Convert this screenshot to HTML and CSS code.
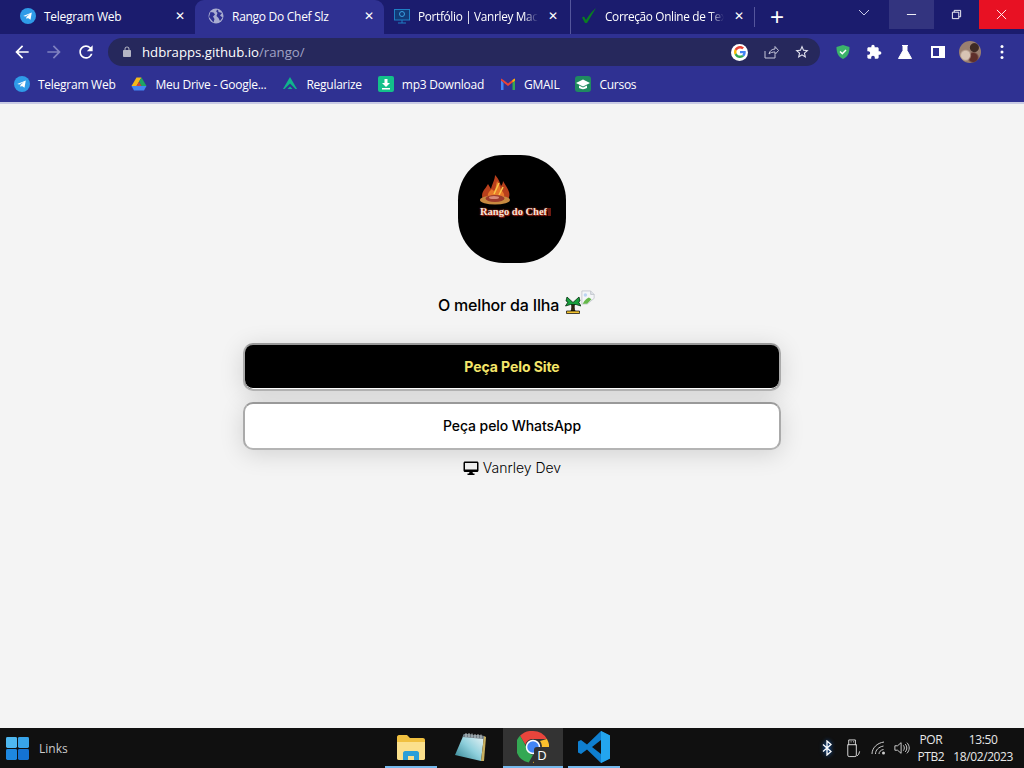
FILE: index.html
```html
<!DOCTYPE html>
<html lang="pt-BR">
<head>
    <meta charset="UTF-8">
    <meta name="viewport" content="width=device-width, initial-scale=1.0">
    <title>Rango Do Chef Slz</title>
    <link rel="stylesheet" href="styles.css">
</head>
<body>
    <svg class="defs" width="0" height="0">
        <symbol id="telegram" viewBox="0 0 16 16">
            <circle cx="8" cy="8" r="8" fill="#2f9be8"/>
            <path d="M3.2 8l8.6-3.5-1.3 7.2-2.6-1.8-1.3 1.2-.3-2.2 3.6-3-4.6 2.7z" fill="#fff"/>
        </symbol>
    </svg>

    <header class="chrome">
        <div class="tabstrip">
            <div class="tab">
                <svg class="favicon"><use href="#telegram"/></svg>
                <span class="tab-title">Telegram Web</span>
                <span class="tab-close">✕</span>
            </div>
            <div class="tab active">
                <svg class="favicon" viewBox="0 0 16 16">
                    <circle cx="8" cy="8" r="7.5" fill="#a9acd0"/>
                    <path d="M2.500 4l3 .5 1.500 2-2 2 1.500 2.500-1 3.500L1 9zM10 1.500l.5 2.500 3.500 1-2 2.500 2.500 2-2.500 3.500-1.500-3-2-2 1-3-1.500-2z" fill="#2f3192"/>
                </svg>
                <span class="tab-title">Rango Do Chef Slz</span>
                <span class="tab-close">✕</span>
            </div>
            <div class="tab third">
                <svg class="favicon" viewBox="0 0 16 16">
                    <rect x="0.500" y="1.500" width="15" height="10.500" fill="#123a78" stroke="#1f7fc4"/>
                    <circle cx="8" cy="6" r="2.500" fill="none" stroke="#3aa0e0"/>
                    <path d="M4 15h8M8 12v3" stroke="#1f7fc4"/>
                </svg>
                <span class="tab-title fade">Portfólio | Vanrley Mac</span>
                <span class="tab-close">✕</span>
            </div>
            <div class="tab sep">
                <svg class="favicon" viewBox="0 0 16 16">
                    <path d="M1 9.500l3 5.500h2L15 0C10 4 7.500 8 5 12L3 8.500z" fill="#0a7d22"/>
                </svg>
                <span class="tab-title fade">Correção Online de Tex</span>
                <span class="tab-close">✕</span>
            </div>
            <span class="new-tab">+</span>
            <svg class="tab-search" viewBox="0 0 12 8"><path d="M1 1l5 5 5-5" fill="none" stroke="#c8cae8"/></svg>
            <div class="win-controls">
                <div class="win-btn min"><svg viewBox="0 0 12 12"><path d="M1 6h10" stroke="#fff"/></svg></div>
                <div class="win-btn"><svg viewBox="0 0 12 12"><path d="M1.500 3.500h7v7h-7zM3.500 3.500v-2h7v7h-2" fill="none" stroke="#fff"/></svg></div>
                <div class="win-btn close"><svg viewBox="0 0 12 12"><path d="M1 1l10 10M11 1L1 11" stroke="#fff"/></svg></div>
            </div>
        </div>

        <div class="toolbar">
            <svg class="nav-icon" viewBox="0 0 24 24"><path d="M20 11H7.830l5.590-5.590L12 4l-8 8 8 8 1.410-1.410L7.830 13H20v-2z" fill="#fff"/></svg>
            <svg class="nav-icon" viewBox="0 0 24 24"><path d="M12 4l-1.410 1.410L16.170 11H4v2h12.170l-5.580 5.590L12 20l8-8z" fill="#7f81c0"/></svg>
            <svg class="nav-icon" viewBox="0 0 24 24"><path d="M17.650 6.350A7.958 7.958 0 0 0 12 4c-4.420 0-7.990 3.580-7.990 8s3.570 8 7.990 8c3.730 0 6.840-2.550 7.730-6h-2.080A5.990 5.990 0 0 1 12 18c-3.310 0-6-2.690-6-6s2.690-6 6-6c1.660 0 3.140.690 4.220 1.780L13 11h7V4l-2.350 2.350z" fill="#fff"/></svg>
            <div class="omnibox">
                <svg class="lock" viewBox="0 0 24 24"><path d="M18 8h-1V6c0-2.760-2.240-5-5-5S7 3.240 7 6v2H6c-1.100 0-2 .9-2 2v10c0 1.100.9 2 2 2h12c1.100 0 2-.9 2-2V10c0-1.100-.9-2-2-2zM9 6c0-1.660 1.340-3 3-3s3 1.340 3 3v2H9V6z" fill="#b4b5c4"/></svg>
                <span class="url">hdbrapps.github.io<span class="url-path">/rango/</span></span>
                <span class="google-badge">
                    <svg viewBox="0 0 48 48">
                        <path fill="#EA4335" d="M24 9.500c3.540 0 6.710 1.220 9.210 3.600l6.850-6.850C35.900 2.380 30.470 0 24 0 14.620 0 6.510 5.380 2.560 13.220l7.980 6.190C12.430 13.720 17.740 9.500 24 9.500z"/>
                        <path fill="#4285F4" d="M46.980 24.550c0-1.570-.15-3.090-.38-4.550H24v9.020h12.940c-.58 2.960-2.260 5.480-4.780 7.180l7.730 6c4.510-4.180 7.090-10.360 7.090-17.650z"/>
                        <path fill="#FBBC05" d="M10.530 28.590c-.48-1.450-.76-2.990-.76-4.590s.27-3.140.76-4.590l-7.980-6.190C.92 16.460 0 20.120 0 24c0 3.880.92 7.540 2.560 10.780l7.970-6.190z"/>
                        <path fill="#34A853" d="M24 48c6.480 0 11.930-2.130 15.890-5.810l-7.730-6c-2.150 1.450-4.920 2.300-8.160 2.300-6.260 0-11.570-4.220-13.470-9.910l-7.980 6.190C6.510 42.620 14.620 48 24 48z"/>
                    </svg>
                </span>
                <svg class="omni-icon" viewBox="0 0 16 16"><path d="M2 7v7h10v-3M6 10c.5-3 3-5 6-5V2.500L15.500 6.500 12 10.500V8c-2.500 0-4.500.500-6 2z" fill="none" stroke="#c4c5d8"/></svg>
                <svg class="omni-icon star" viewBox="0 0 24 24"><path d="M22 9.240l-7.190-.62L12 2 9.190 8.630 2 9.240l5.460 4.730L5.820 21 12 17.270 18.180 21l-1.630-7.030L22 9.240zM12 15.400l-3.760 2.270 1-4.280-3.320-2.880 4.380-.38L12 6.100l1.710 4.040 4.380.38-3.320 2.880 1 4.280L12 15.400z" fill="#e4e4f0"/></svg>
            </div>
            <div class="extensions">
                <svg class="ext" viewBox="0 0 16 16"><path d="M8 1l6.500 2c0 6-1.500 9.500-6.500 12C3 12.500 1.500 9 1.500 3z" fill="#3bb36a"/><path d="M5 7.500l2.300 2.300L11 6" fill="none" stroke="#fff" stroke-width="1.500"/></svg>
                <svg class="ext" viewBox="0 0 24 24"><path d="M20.500 11H19V7c0-1.100-.9-2-2-2h-4V3.500C13 2.120 11.880 1 10.500 1S8 2.120 8 3.500V5H4c-1.100 0-1.990.9-1.990 2v3.800H3.500c1.490 0 2.700 1.210 2.700 2.700s-1.210 2.700-2.700 2.700H2V20c0 1.100.9 2 2 2h3.800v-1.500c0-1.490 1.210-2.700 2.700-2.700 1.490 0 2.700 1.210 2.700 2.700V22H17c1.100 0 2-.9 2-2v-4h1.500c1.380 0 2.500-1.120 2.500-2.500S21.880 11 20.500 11z" fill="#fff"/></svg>
                <svg class="ext flask" viewBox="0 0 16 16"><path d="M5 1.500h6M6 2v4.500L1.500 14.500h13L10 6.500V2z" fill="#fff" stroke="#fff"/></svg>
                <svg class="ext panel" viewBox="0 0 16 16"><path d="M1 2h14v12H1zM3 4v8h6V4z" fill="#fff" fill-rule="evenodd"/></svg>
                <span class="avatar"></span>
                <svg class="ext menu" viewBox="0 0 4 16"><circle cx="2" cy="2.500" r="1.500" fill="#fff"/><circle cx="2" cy="8" r="1.500" fill="#fff"/><circle cx="2" cy="13.500" r="1.500" fill="#fff"/></svg>
            </div>
        </div>

        <nav class="bookmarks">
            <a class="bookmark"><svg class="favicon"><use href="#telegram"/></svg>Telegram Web</a>
            <a class="bookmark">
                <svg class="favicon" viewBox="0 0 16 16">
                    <path d="M5.500 1.500h5l-5 8.500H.5z" fill="#f5b91a"/>
                    <path d="M10.500 1.500l5 8.500h-5l-2.500-4.300z" fill="#1fa463"/>
                    <path d="M.5 10l2.500 4.500h10L15.500 10z" fill="#4285f4"/>
                    <path d="M5.500 10h5l-2.500-4.300z" fill="#d2463a"/>
                </svg>Meu Drive - Google...</a>
            <a class="bookmark">
                <svg class="favicon" viewBox="0 0 16 16">
                    <path d="M8 1l7 12H1z" fill="#10b48c"/>
                    <path d="M3 14l5-5 5 5" fill="none" stroke="#2f3192" stroke-width="2"/>
                </svg>Regularize</a>
            <a class="bookmark">
                <svg class="favicon" viewBox="0 0 16 16">
                    <rect width="16" height="16" rx="2" fill="#13c08a"/>
                    <path d="M6.500 3h3v4H12l-4 4-4-4h2.500zM4 12h8v1.500H4z" fill="#fff"/>
                </svg>mp3 Download</a>
            <a class="bookmark">
                <svg class="favicon" viewBox="0 0 16 16">
                    <path d="M1 4v10h2.500V7z" fill="#4285f4"/>
                    <path d="M12.500 7v7H15V4z" fill="#34a853"/>
                    <path d="M1 2.500v2L8 10l7-5.500v-2L12.500 4 8 7.500 3.500 4z" fill="#ea4335"/>
                    <path d="M12.500 4L15 2.500v2l-2.500 2z" fill="#fbbc05"/>
                </svg>GMAIL</a>
            <a class="bookmark">
                <svg class="favicon" viewBox="0 0 16 16">
                    <rect width="16" height="16" rx="3" fill="#1f8a60"/>
                    <path d="M8 3.500L15 7 8 10.500 1 7zM4 9.500v2.500c2.500 1.500 5.500 1.500 8 0V9.500L8 11.500z" fill="#fff"/>
                </svg>Cursos</a>
        </nav>
    </header>

    <main class="page">
        <div class="logo">
            <svg class="logo-flame" viewBox="0 0 32 30">
                <path d="M3 25C0 17 5 15 8 9c1 2 2 3 3 5 1-5 4-9 4-14 4 4 5 8 6 11 1-1 2-3 2-5 2 4 5 7 6 11 1 3 0 6-1 8z" fill="#b8401c"/>
                <path d="M8 22c-1-4 2-6 4-8 1 2 2 2 3 1 1-3 1-6 2-9 2 3 3 6 4 9 2 2 4 4 3 7z" fill="#e8782a"/>
                <path d="M19 8l-5 11M23 12l-4 8" stroke="#f8c848" stroke-width="1.500"/>
                <ellipse cx="15" cy="25" rx="15" ry="4.500" fill="#c88a40"/>
                <ellipse cx="15" cy="23.500" rx="9.500" ry="3.500" fill="#9c3a2c"/>
                <ellipse cx="14" cy="22.500" rx="5" ry="1.500" fill="#d88a78"/>
            </svg>
            <span class="logo-text">Rango do Chef</span>
        </div>

        <p class="tagline">O melhor da Ilha
            <svg class="palm" viewBox="0 0 16 18">
                <path d="M6.500 8c.5 3 .3 5-.5 7h4c-.8-2-1-4-.5-7z" fill="#3a2a10" stroke="#000" stroke-width=".7"/>
                <path d="M8 6.500L2 1 1 5l2 1-2.500 4 5-1.500L8 8.500l3 0 5 1.500-2.500-4L15 5l-1-4z" fill="#17a03c" stroke="#04300f" stroke-width=".8"/>
                <path d="M1.500 15h13v2.500h-13z" fill="#f2c230" stroke="#000" stroke-width=".7"/>
            </svg><svg class="broken" viewBox="0 0 16 16">
                <path d="M1 .5h10l4 4V9L7 15.500H1z" fill="#f4f6f8" stroke="#b8bcc4" stroke-width=".8"/>
                <path d="M2 15c2-4 5-6 7-7l3 2-5 5z" fill="#66b84a"/>
                <path d="M11 .5v4h4" fill="#dfe3e8" stroke="#b8bcc4" stroke-width=".8"/>
                <circle cx="5" cy="5" r="2" fill="#bcd4f2"/>
            </svg>
        </p>

        <div class="links">
            <a class="link-btn dark">Peça Pelo Site</a>
            <a class="link-btn">Peça pelo WhatsApp</a>
        </div>

        <p class="credit">
            <svg class="monitor" viewBox="0 0 16 14">
                <path d="M2 .5h12c.8 0 1.500.7 1.500 1.500v7.500c0 .8-.7 1.500-1.500 1.500H2c-.8 0-1.500-.7-1.500-1.500V2C.5 1.200 1.200.5 2 .5zM2 2v6.500h12V2z" fill="#000" fill-rule="evenodd"/>
                <path d="M6.500 11h3l.5 1.500h1.500V14h-7v-1.500H6z" fill="#000"/>
            </svg>
            Vanrley Dev
        </p>
    </main>

    <footer class="taskbar">
        <div class="task-left">
            <svg class="start" viewBox="0 0 24 24">
                <rect x="0" y="0" width="11.500" height="11.500" rx="1.500" fill="#4fb8f0"/>
                <rect x="12.500" y="0" width="11.500" height="11.500" rx="1.500" fill="#38a4ea"/>
                <rect x="0" y="12.500" width="11.500" height="11.500" rx="1.500" fill="#1e88e0"/>
                <rect x="12.500" y="12.500" width="11.500" height="11.500" rx="1.500" fill="#1473d4"/>
            </svg>
            <span class="links-label">Links</span>
        </div>
        <div class="task-apps">
            <div class="app running explorer">
                <svg viewBox="0 0 28 26">
                    <path d="M0 3c0-1 .8-2 2-2h8l3 3h13c1 0 2 .8 2 2v18c0 1-1 2-2 2H2c-1 0-2-1-2-2z" fill="#f0c040"/>
                    <path d="M0 8h28v16c0 1-1 2-2 2H2c-1 0-2-1-2-2z" fill="#fbe08c"/>
                    <path d="M6 26v-7c0-1 1-2 2-2h12c1 0 2 1 2 2v7h-5v-4h-6v4z" fill="#2a9fd8"/>
                </svg>
            </div>
            <div class="app notepad">
                <svg viewBox="0 0 32 30">
                    <defs>
                        <linearGradient id="padShade" x1="0" y1="1" x2="1" y2="0">
                            <stop offset="0" stop-color="#2c7f8e"/>
                            <stop offset="0.5" stop-color="#8fd0dc"/>
                            <stop offset="1" stop-color="#f2f6f8"/>
                        </linearGradient>
                    </defs>
                    <path d="M10 2l20 2-3 25L1 23z" fill="url(#padShade)"/>
                    <path d="M27 29l3-25 2 1-2 24z" fill="#c8b060"/>
                    <path d="M10 2l20 2-.4 3L8.500 5z" fill="#6f7c84"/>
                    <path d="M12 1v4M15 1v4M18 1.500v4M21 2v4M24 2v4M27 2.500v4" stroke="#d8dde0" stroke-width=".8"/>
                </svg>
            </div>
            <div class="app running current">
                <span class="chrome-logo">
                    <svg viewBox="0 0 32 32">
                        <path d="M16 0a16 16 0 0 1 13.900 8H16a8 8 0 0 0-7.700 5.800L3 4.800A16 16 0 0 1 16 0z" fill="#e8453c"/>
                        <path d="M3 4.800l6.900 12A8 8 0 0 0 16 24l-4.300 7.400A16 16 0 0 1 3 4.800z" fill="#34a853"/>
                        <path d="M29.900 8A16 16 0 0 1 16 32l6.900-12A8 8 0 0 0 23 10z" fill="#fbc02d"/>
                        <circle cx="16" cy="16" r="6.500" fill="#4285f4" stroke="#fff" stroke-width="1.500"/>
                    </svg>
                    <span class="chrome-badge">D</span>
                </span>
            </div>
            <div class="app running vscode">
                <svg viewBox="0 0 32 32">
                    <path d="M23 0l9 4.500v23L23 32 9 18.500 3 23 0 21.500v-11L3 9l6 4.500z" fill="#0f7fd0"/>
                    <path d="M23 0l9 4.500v23L23 32z" fill="#23a5ee"/>
                    <path d="M23 9l-9 7 9 7z" fill="#111"/>
                </svg>
            </div>
        </div>
        <div class="tray">
            <svg class="tray-icon bt" viewBox="0 0 12 16"><path d="M2 4.500l8 7-4 3.500V1l4 3.500-8 7" fill="none" stroke="#fff" stroke-width="1.300"/></svg>
            <svg class="tray-icon usb" viewBox="0 0 16 20"><path d="M3.500 1h7v5h1v11c0 1-.5 1.500-1.500 1.500H4c-1 0-1.500-.5-1.500-1.500V6h1zM2.500 6h9M5.500 3h1M8 3h1M12 18l2-2 1-3" fill="none" stroke="#ddd"/></svg>
            <svg class="tray-icon wifi" viewBox="0 0 16 16"><path d="M1 14C1 8 6 3 13 2M4.500 14c0-4 3-7 8-8M8 14c0-2 1.500-4 4.500-4.500" fill="none" stroke="#ccc"/><circle cx="12.500" cy="13" r="1.500" fill="#ccc"/></svg>
            <svg class="tray-icon vol" viewBox="0 0 18 16"><path d="M1 5.500h3L8 2v12l-4-3.500H1zM10.500 5c1.500 2 1.500 4 0 6M12.500 3.500c2.500 2.500 2.500 6.500 0 9M14.500 2c3.500 3.500 3.500 8.500 0 12" fill="none" stroke="#ddd"/></svg>
            <div class="lang"><span>POR</span><span>PTB2</span></div>
            <div class="clock"><span>13:50</span><span>18/02/2023</span></div>
        </div>
    </footer>
</body>
</html>
```

FILE: styles.css
```css
* {
    box-sizing: border-box;
}
html, body {
    margin: 0;
    height: 100%;
}
body {
    width: 1024px;
    height: 768px;
    overflow: hidden;
    display: flex;
    flex-direction: column;
    background: #f4f4f4;
    font-family: "Open Sans", "Noto Sans", sans-serif;
}
.defs {
    position: absolute;
}

/* browser chrome */
.chrome {
    height: 104px;
    background: #2f3192;
    border-bottom: 2px solid #c9cbe4;
    color: #fff;
    font-size: 12px;
    flex-shrink: 0;
}
.tabstrip {
    height: 34px;
    background: #1b1c6e;
    display: flex;
    align-items: flex-start;
}
.tab {
    width: 195px;
    height: 34px;
    padding: 0 8px 2px 20px;
    display: flex;
    align-items: center;
    gap: 8px;
    color: #fff;
}
.tab.active {
    width: 189px;
    padding-left: 13px;
    background: #2f3192;
    border-radius: 9px 9px 0 0;
}
.tab.third {
    width: 186px;
    padding-left: 10px;
    padding-right: 10px;
}
.tab.sep {
    width: 185px;
    padding-left: 10px;
    padding-right: 9px;
    border-left: 1px solid #55569c;
    background: linear-gradient(#55569c, #55569c) right center / 1px 20px no-repeat;
}
.favicon {
    width: 16px;
    height: 16px;
    flex-shrink: 0;
}
.tab-title {
    flex: 1;
    min-width: 0;
    white-space: nowrap;
    font-size: 12px;
    letter-spacing: -0.28px;
}
.tab-title.fade {
    font-size: 11.8px;
    letter-spacing: -0.32px;
    -webkit-mask-image: linear-gradient(90deg, #000 88%, transparent);
    mask-image: linear-gradient(90deg, #000 88%, transparent);
}
.tab-close {
    width: 14px;
    flex-shrink: 0;
    font-size: 12px;
    font-weight: 700;
    text-align: center;
    font-family: "DejaVu Sans", sans-serif;
}
.new-tab {
    width: 44px;
    height: 34px;
    text-align: center;
    font: 400 24px/34px "Liberation Sans", sans-serif;
}
.tab-search {
    width: 12px;
    height: 8px;
    margin: 9px 0 0 59px;
}
.win-controls {
    margin-left: auto;
    display: flex;
}
.win-btn {
    width: 45px;
    height: 29px;
    display: flex;
    align-items: center;
    justify-content: center;
}
.win-btn svg {
    width: 11px;
    height: 11px;
}
.win-btn.min {
    background: #33347f;
}
.win-btn.close {
    background: #e81123;
}

.toolbar {
    height: 36px;
    display: flex;
    align-items: center;
    padding-left: 12px;
}
.nav-icon {
    width: 20px;
    height: 20px;
    margin-right: 12px;
}
.omnibox {
    width: 712px;
    height: 28px;
    border-radius: 14px;
    background: #26285c;
    display: flex;
    align-items: center;
    padding-left: 13px;
}
.lock {
    width: 12px;
    height: 12px;
    margin-right: 9px;
}
.url {
    flex: 1;
    font-size: 13.2px;
}
.url-path {
    color: #a0a2c4;
}
.google-badge {
    width: 17px;
    height: 17px;
    margin-right: 15px;
    border-radius: 50%;
    background: #fff;
    display: flex;
    align-items: center;
    justify-content: center;
}
.google-badge svg {
    width: 12px;
    height: 12px;
}
.omni-icon {
    width: 16px;
    height: 16px;
    margin-right: 10px;
}
.omni-icon.star {
    margin: 0 10px 0 5px;
}
.extensions {
    display: flex;
    align-items: center;
    margin-left: 15px;
}
.ext {
    width: 16px;
    height: 16px;
    margin-right: 15px;
}
.ext.flask {
    margin-right: 17px;
}
.ext.panel {
    margin-right: 13px;
}
.avatar {
    width: 22px;
    height: 22px;
    border-radius: 50%;
    background:
        radial-gradient(circle at 70% 30%, #3e2a24 0 4px, transparent 5px),
        radial-gradient(circle at 30% 65%, #d8c4b4 0 4px, transparent 6px),
        radial-gradient(circle at 65% 75%, #5e2f2a 0 4px, transparent 6px),
        #9a7f70;
    margin-right: 19px;
}
.ext.menu {
    width: 4px;
    height: 16px;
    margin: 0;
}

.bookmarks {
    height: 32px;
    padding: 0 0 4px 14px;
    display: flex;
    align-items: center;
    gap: 16px;
}
.bookmark {
    display: flex;
    align-items: center;
    gap: 8px;
    font-size: 12px;
    letter-spacing: -0.26px;
    white-space: nowrap;
}

/* the page itself */
.page {
    flex: 1;
    display: flex;
    flex-direction: column;
    align-items: center;
    padding-top: 51px;
    font-family: Inter, Roboto, sans-serif;
    color: #000;
}
.logo {
    width: 108px;
    height: 108px;
    border-radius: 42%;
    background: #000;
    display: flex;
    flex-direction: column;
    padding: 20px 0 0 22px;
}
.logo-flame {
    width: 32px;
    height: 30px;
}
.logo-text {
    display: flex;
    align-items: center;
    gap: 1px;
    white-space: nowrap;
    font: 700 10.5px/14px "Liberation Serif", serif;
    color: #f6e4d8;
    text-shadow: 0 0 2px #c8321e, 1px 1px 1px #a81e10;
}
.logo-text::after {
    content: "";
    width: 3px;
    height: 8px;
    background: #6e1a12;
}
.tagline {
    margin: 21px 0 0;
    height: 34px;
    display: flex;
    align-items: flex-end;
    font-size: 16px;
    font-weight: 500;
    letter-spacing: -0.2px;
    line-height: 26px;
    padding-left: 9px;
}
.palm {
    width: 16px;
    height: 18px;
    margin: 0 0 4px 6px;
}
.broken {
    width: 14px;
    height: 15px;
    margin-bottom: 13px;
}
.links {
    margin-top: 25px;
    width: 538px;
    display: flex;
    flex-direction: column;
    gap: 11px;
}
.link-btn {
    height: 48px;
    padding-bottom: 1px;
    display: flex;
    align-items: center;
    justify-content: center;
    background: #fff;
    border: 2px solid;
    border-color: #999 #aaa #b4b4b4 #aaa;
    border-radius: 10px;
    box-shadow: 0 4px 24px rgba(0, 0, 0, 0.14);
    font-size: 14px;
    font-weight: 500;
    letter-spacing: -0.08px;
}
.link-btn.dark {
    background: #000;
    color: #f5e66a;
    font-weight: 700;
    box-shadow: 0 4px 24px rgba(0, 0, 0, 0.14), inset 0 -1px 0 #fff;
}
.credit {
    margin: 8px 0 0;
    display: flex;
    align-items: center;
    gap: 4px;
    font-size: 14px;
    line-height: 20px;
    font-weight: 300;
}
.monitor {
    width: 16px;
    height: 14px;
}

/* windows taskbar */
.taskbar {
    height: 40px;
    background: #101010;
    color: #eee;
    display: flex;
    flex-shrink: 0;
    font-size: 12px;
    font-family: "Open Sans", "Noto Sans", sans-serif;
}
.task-left {
    width: 385px;
    display: flex;
    align-items: center;
    padding-left: 6px;
    gap: 10px;
}
.start {
    width: 23px;
    height: 23px;
}
.links-label {
    color: #ccc;
    font-size: 12px;
}
.task-apps {
    display: flex;
}
.app {
    width: 60px;
    display: flex;
    align-items: center;
    justify-content: center;
    border-bottom: 2px solid transparent;
}
.app svg {
    width: 32px;
    height: 32px;
}
.app.explorer {
    width: 52px;
}
.app.explorer svg {
    width: 28px;
    height: 26px;
}
.app.notepad {
    width: 66px;
}
.app.notepad svg {
    width: 32px;
    height: 30px;
}
.app.vscode {
    width: 52px;
    margin-left: 5px;
}
.app.running {
    border-bottom-color: #76b9ed;
}
.app.current {
    background: #333;
}
.chrome-logo {
    position: relative;
    width: 32px;
    height: 32px;
}
.chrome-badge {
    position: absolute;
    right: -1px;
    bottom: 0;
    width: 16px;
    height: 16px;
    background: #333;
    border-radius: 3px 0 0 0;
    color: #fff;
    font-size: 13px;
    line-height: 16px;
    text-align: center;
}
.tray {
    margin-left: auto;
    display: flex;
    align-items: center;
    padding-right: 11px;
}
.tray-icon {
    width: 16px;
    height: 16px;
    margin-right: 7px;
}
.tray-icon.bt {
    width: 12px;
    margin-right: 12px;
    filter: drop-shadow(0 0 2px #1a6ad0);
}
.tray-icon.usb {
    height: 19px;
    margin-right: 10px;
}
.lang, .clock {
    display: flex;
    flex-direction: column;
    align-items: center;
    font-size: 12px;
    line-height: 17px;
    letter-spacing: -0.4px;
    color: #e8e8e8;
}
.lang {
    margin: 0 9px 0 0;
}
```
